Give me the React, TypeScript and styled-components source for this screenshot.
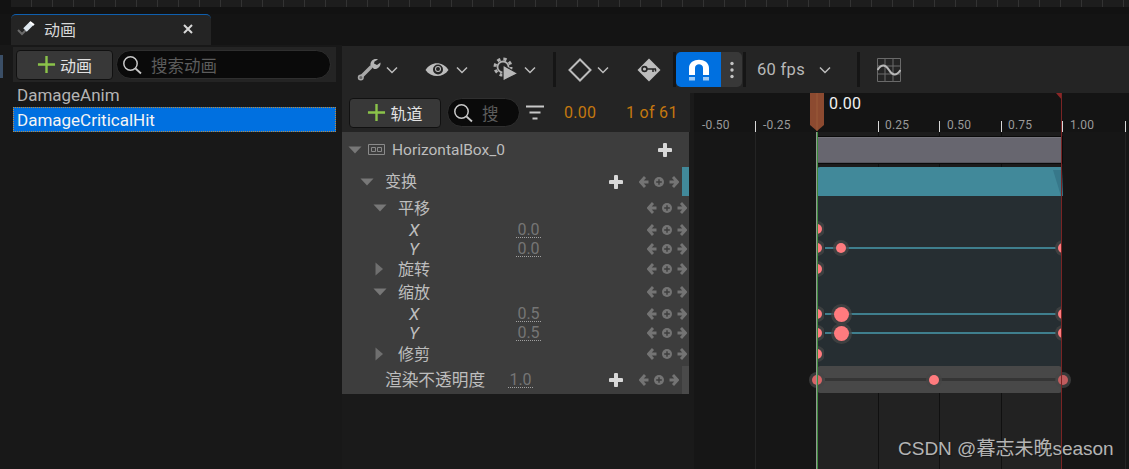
import React from "react";
import styled, { createGlobalStyle } from "styled-components";

const FONT = `Roboto, "Noto Sans CJK SC", sans-serif`;

const Global = createGlobalStyle`
  html, body { margin: 0; padding: 0; background: #141414; }
  * { box-sizing: border-box; }
`;

const Page = styled.div`
  position: relative;
  width: 1129px;
  height: 469px;
  overflow: hidden;
  display: flex;
  flex-direction: column;
  background: #141414;
  font-family: ${FONT};
  font-size: 16px;
  color: #c0c0c0;
`;

const TopStrip = styled.div`
  height: 14px;
  flex: none;
  position: relative;
  background: #121212;
  &::before {
    content: "";
    position: absolute;
    left: 11px;
    right: 0;
    top: 0;
    height: 7px;
    background-color: #1d1d1d;
    background-image: repeating-linear-gradient(90deg, transparent 0 20px, #333 20px 21px);
  }
`;

const TabBar = styled.div`
  height: 31px;
  flex: none;
  padding-left: 11px;
  display: flex;
  background: #141414;
`;

const Tab = styled.div`
  width: 200px;
  height: 31px;
  background: #242424;
  border-top: 1px solid #0f5fae;
  border-radius: 5px 5px 0 0;
  display: flex;
  align-items: center;
  padding: 0 18px 2px 6px;
  color: #d8d8d8;
`;

const TabLabel = styled.span`
  margin-left: 7px;
  flex: 1;
`;

const Body = styled.div`
  flex: 1;
  display: flex;
  min-height: 0;
`;

const LeftPanel = styled.div`
  width: 342px;
  flex: none;
  padding: 2px 6px 0 13px;
  display: flex;
  flex-direction: column;
  position: relative;
  background: #181818;
`;

const LeftEdge = styled.div`
  position: absolute;
  left: 0;
  top: 10px;
  width: 3px;
  height: 23px;
  background: #3a4e66;
`;

const LeftToolbar = styled.div`
  height: 35px;
  background: #242424;
  display: flex;
  align-items: center;
  padding-left: 3px;
`;

const AddButton = styled.div<{ $w: number }>`
  width: ${(p) => p.$w}px;
  height: 30px;
  flex: none;
  display: flex;
  align-items: center;
  justify-content: center;
  gap: 4px;
  background: #383838;
  border: 1px solid #111;
  border-radius: 4px;
  color: #e2e2e2;
  font-size: 16px;
`;

const SearchBox = styled.div<{ $w: number; $ml: number }>`
  width: ${(p) => p.$w}px;
  margin-left: ${(p) => p.$ml}px;
  height: 29px;
  flex: none;
  overflow: hidden;
  display: flex;
  align-items: center;
  gap: 9px;
  padding-left: 5px;
  background: #0a0a0a;
  border: 1px solid #2f2f2f;
  border-radius: 15px;
  color: #5c5c5c;
  font-size: 16.5px;
  white-space: nowrap;
`;

const AssetRow = styled.div<{ $selected?: boolean }>`
  height: 25px;
  padding-left: 4px;
  display: flex;
  align-items: center;
  font-size: 17px;
  color: ${(p) => (p.$selected ? "#f4f4f4" : "#b4b4b4")};
  background: ${(p) => (p.$selected ? "#0070e0" : "transparent")};
  outline: ${(p) => (p.$selected ? "1px dotted #c08a3a" : "none")};
  outline-offset: -1px;
`;

const RightPanel = styled.div`
  flex: 1;
  min-width: 0;
  display: flex;
  flex-direction: column;
  padding-top: 1px;
`;

const MainToolbar = styled.div`
  height: 47px;
  flex: none;
  background: #242424;
  display: flex;
  align-items: center;
  padding-left: 15px;
`;

const ToolItem = styled.div<{ $w: number }>`
  width: ${(p) => p.$w}px;
  flex: none;
  display: flex;
  align-items: center;
`;

const Separator = styled.div<{ $ml: number; $mr: number }>`
  width: 3px;
  height: 35px;
  flex: none;
  margin: 0 ${(p) => p.$mr}px 0 ${(p) => p.$ml}px;
  background: #151515;
`;

const SnapButton = styled.div`
  width: 45px;
  height: 35px;
  flex: none;
  background: #0070e0;
  border-radius: 5px 0 0 5px;
  display: flex;
  align-items: center;
  justify-content: center;
`;

const SnapMenu = styled.div`
  width: 21px;
  height: 35px;
  flex: none;
  background: #383838;
  border-radius: 0 5px 5px 0;
  display: flex;
  align-items: center;
  justify-content: center;
`;

const FpsLabel = styled.span`
  color: #b8b8b8;
  font-size: 16.5px;
  width: 62px;
  letter-spacing: 0.3px;
`;

const Workspace = styled.div`
  flex: 1;
  min-height: 0;
  display: flex;
  background: #1a1a1a;
`;

const TrackColumn = styled.div`
  width: 348px;
  flex: none;
  display: flex;
  flex-direction: column;
`;

const TrackToolbar = styled.div`
  height: 39px;
  flex: none;
  background: #242424;
  display: flex;
  align-items: center;
  padding-left: 7px;
`;

const FilterSlot = styled.div`
  margin-left: 6px;
  display: flex;
  width: 38px;
`;

const TimeText = styled.span<{ $w: number }>`
  width: ${(p) => p.$w}px;
  flex: none;
  color: #c4780f;
  font-size: 16px;
  letter-spacing: 0.3px;
`;

const TrackList = styled.div`
  width: 347px;
  background: #3d3d3d;
  display: flex;
  flex-direction: column;
`;

const TrackRow = styled.div<{ $h: number; $indent: number }>`
  height: ${(p) => p.$h}px;
  flex: none;
  position: relative;
  display: flex;
  align-items: center;
  padding-left: ${(p) => p.$indent}px;
  color: #bdbdbd;
`;

const CaretSlot = styled.div<{ $w: number }>`
  width: ${(p) => p.$w}px;
  flex: none;
  display: flex;
  align-items: center;
`;

const RowLabel = styled.span<{ $italic?: boolean; $w?: number; $size?: number }>`
  font-style: ${(p) => (p.$italic ? "italic" : "normal")};
  font-size: ${(p) => p.$size ?? (p.$italic ? 17 : 16)}px;
  line-height: 20px;
  padding: ${(p) => (p.$italic ? "0 0 1px" : "1px 0 0")};
  ${(p) => (p.$w ? `width: ${p.$w}px; flex: none;` : "")}
`;

const ObjectLabel = styled.span`
  margin-left: 7px;
  font-size: 15.5px;
  line-height: 20px;
`;

const ValueField = styled.span`
  width: 25px;
  flex: none;
  text-align: center;
  font-size: 16px;
  line-height: 15px;
  color: #757575;
  border-bottom: 1px dotted #a0a0a0;
`;

const RowRight = styled.div<{ $pr: number }>`
  margin-left: auto;
  padding-right: ${(p) => p.$pr}px;
  display: flex;
  align-items: center;
`;

const PlusSlot = styled.div`
  width: 14px;
  margin-right: 16px;
  flex: none;
  display: flex;
`;

const ColorTab = styled.div<{ $c: string }>`
  position: absolute;
  right: 0;
  top: 0;
  bottom: 0;
  width: 7px;
  background: ${(p) => p.$c};
`;

const Timeline = styled.div`
  flex: 1;
  min-width: 0;
  margin-left: 4px;
  position: relative;
  background: #161616;
  display: flex;
  flex-direction: column;
`;

const Ruler = styled.div`
  height: 39px;
  flex: none;
  position: relative;
  background: #141414;
`;

const Tick = styled.div<{ $x: number }>`
  position: absolute;
  left: ${(p) => p.$x}px;
  bottom: 0;
  width: 1px;
  height: 11px;
  background: #d8d8d8;
`;

const TickLabel = styled.span<{ $x: number }>`
  position: absolute;
  left: ${(p) => p.$x}px;
  top: 25px;
  font-size: 12px;
  line-height: 15px;
  color: #9a9a9a;
  letter-spacing: 0.2px;
`;

const CurrentTime = styled.span`
  position: absolute;
  left: 135px;
  top: 1px;
  font-size: 16px;
  line-height: 19px;
  color: #f0f0f0;
  letter-spacing: 0.3px;
`;

const PlayHead = styled.svg`
  position: absolute;
  left: 115px;
  top: 0;
`;

const EndFlag = styled.svg`
  position: absolute;
  left: 362px;
  top: 0;
`;

const Tracks = styled.div`
  flex: 1;
  margin-left: 123px;
  width: 245px;
  display: flex;
  flex-direction: column;
  position: relative;
`;

const GridLine = styled.div<{ $x: number }>`
  position: absolute;
  top: 0;
  bottom: 0;
  width: 1px;
  left: ${(p) => p.$x}px;
  background: #101010;
`;

const OuterLine = styled(GridLine)`
  top: 39px;
  background: #242424;
`;

const StartLine = styled.div`
  position: absolute;
  left: 122px;
  top: 39px;
  bottom: 0;
  width: 2px;
  background: linear-gradient(90deg, #8f9a8f 50%, #3c8a3c 50%);
  z-index: 3;
`;

const EndLine = styled.div`
  position: absolute;
  left: 367px;
  top: 0;
  bottom: 0;
  width: 1px;
  background: #7a2424;
  z-index: 3;
`;

const ObjectBar = styled.div`
  height: 35px;
  flex: none;
  position: relative;
  background: #1c1c1c;
  padding: 5px 0 4px;
`;

const ObjectFill = styled.div`
  position: relative;
  height: 100%;
  background: #67666f;
  border-top: 1px solid #75747c;
  border-bottom: 1px solid #55545c;
  outline: 1px solid #0a0a0a;
`;

const SectionHeader = styled.div`
  height: 29px;
  flex: none;
  position: relative;
  background: #41899a;
  border-radius: 3px 0 0 0;
`;

const SectionNotch = styled.svg`
  position: absolute;
  right: -1px;
  top: 0;
`;

const ChildArea = styled.div`
  height: 170px;
  flex: none;
  background: #262e32;
  position: relative;
`;

const OpacityBar = styled.div`
  height: 27px;
  flex: none;
  position: relative;
  background: #484848;
  border-radius: 3px;
`;

const BelowArea = styled.div`
  flex: 1;
  position: relative;
  background: #222;
`;

const KeyLine = styled.div<{ $y: number; $c: string; $h?: number }>`
  position: absolute;
  left: 8px;
  right: 6px;
  top: ${(p) => p.$y}px;
  height: ${(p) => p.$h ?? 2}px;
  background: ${(p) => p.$c};
`;

const Key = styled.div<{ $x: number; $y: number; $r: number; $c?: string }>`
  position: absolute;
  left: ${(p) => p.$x - p.$r}px;
  top: ${(p) => p.$y - p.$r}px;
  width: ${(p) => p.$r * 2}px;
  height: ${(p) => p.$r * 2}px;
  border-radius: 50%;
  background: ${(p) => p.$c ?? "#ff7b7e"};
  box-shadow: 0 0 0 3px rgba(70, 70, 70, 0.75);
  z-index: 2;
`;

const ClipBox = styled.div<{ $x: number; $y: number }>`
  position: absolute;
  left: ${(p) => p.$x}px;
  top: ${(p) => p.$y}px;
  width: 7px;
  height: 16px;
  overflow: hidden;
  z-index: 2;
`;

const ClipKey = styled.div<{ $dx: number }>`
  position: absolute;
  left: ${(p) => p.$dx}px;
  top: 3px;
  width: 10px;
  height: 10px;
  border-radius: 50%;
  background: #ff7b7e;
  box-shadow: 0 0 0 3px rgba(70, 70, 70, 0.75);
`;

const Watermark = styled.div`
  position: absolute;
  left: 898px;
  top: 438px;
  font-family: "Liberation Sans", "Noto Sans CJK SC", sans-serif;
  font-size: 19px;
  line-height: 22px;
  color: #b4b4b4;
  text-shadow: 1px 1px 1px #1a1a1a;
  white-space: nowrap;
  z-index: 5;
`;

const Chevron = ({ ml = 4 }: { ml?: number }) => (
  <svg width="12" height="8" viewBox="0 0 12 8" style={{ marginLeft: ml }}>
    <path d="M1 1.5 6 6.5 11 1.5" fill="none" stroke="#bdbdbd" strokeWidth="1.5" />
  </svg>
);

const Plus = ({ s = 19, c = "#8bc34a", w = 2.4 }: { s?: number; c?: string; w?: number }) => (
  <svg width={s} height={s} viewBox="0 0 20 20">
    <path d="M10 1V19M1 10H19" stroke={c} strokeWidth={w * (20 / s)} fill="none" />
  </svg>
);

const WhitePlus = () => (
  <svg width="14" height="14" viewBox="0 0 14 14">
    <path d="M7 1.5V12.5M1.5 7H12.5" stroke="#d8d8d8" strokeWidth="4" fill="none" strokeLinecap="round" />
  </svg>
);

const SearchIcon = () => (
  <svg width="20" height="20" viewBox="0 0 20 20" style={{ flex: "none" }}>
    <circle cx="8.5" cy="8.5" r="6.7" fill="none" stroke="#c8c8c8" strokeWidth="1.5" />
    <path d="M13.5 13.5 19 18.5" stroke="#c8c8c8" strokeWidth="1.8" />
  </svg>
);

const TabIcon = () => (
  <svg width="20" height="18" viewBox="0 0 20 18">
    <path d="M1 10 5 14 9 10" fill="none" stroke="#6a6a6a" strokeWidth="2" />
    <path d="M8 10 15 3" stroke="#dfe8f0" strokeWidth="5" />
    <path d="M13 2 17 5" stroke="#ffffff" strokeWidth="2" />
  </svg>
);

const Wrench = () => (
  <svg width="25" height="25" viewBox="0 0 25 25">
    <path d="M3 21 14 10" stroke="#a8a8a8" strokeWidth="3.5" strokeLinecap="round" />
    <circle cx="3.8" cy="20.5" r="2.3" fill="#666" stroke="#a8a8a8" strokeWidth="1.5" />
    <path d="M21 2.5C17 1 13 4 13.5 8.5L17 12C21 12.5 24 9 23.5 5.5L20 8 17 6.5 17.5 4.5Z" fill="#b4b4b4" />
  </svg>
);

const Eye = () => (
  <svg width="24" height="16" viewBox="0 0 24 16">
    <path d="M0.5 8C6 -1 18 -1 23.5 8 18 16 6 16 0.5 8Z" fill="#bcbcbc" />
    <circle cx="13" cy="7.5" r="5" fill="#242424" />
    <circle cx="13" cy="7" r="3" fill="#bcbcbc" />
    <circle cx="13" cy="7" r="2" fill="#242424" />
  </svg>
);

const GearPlay = () => (
  <svg width="26" height="25" viewBox="0 0 26 25">
    <circle cx="10" cy="10" r="8" fill="none" stroke="#b0b0b0" strokeWidth="3" strokeDasharray="3.3 3" />
    <circle cx="10" cy="10" r="5.5" fill="none" stroke="#b0b0b0" strokeWidth="1.8" />
    <path d="M10 8 25 16.5 10 24Z" fill="#b8b8b8" stroke="#242424" strokeWidth="1.2" />
  </svg>
);

const Diamond = () => (
  <svg width="24" height="24" viewBox="0 0 24 24">
    <path d="M12 1.5 22.5 12 12 22.5 1.5 12Z" fill="none" stroke="#bcbcbc" strokeWidth="2" />
  </svg>
);

const KeyDiamond = () => (
  <svg width="24" height="24" viewBox="0 0 24 24">
    <path d="M12 0.5 23.5 12 12 23.5 0.5 12Z" fill="#bcbcbc" />
    <circle cx="7.5" cy="11" r="2.4" fill="none" stroke="#242424" strokeWidth="1.6" />
    <path d="M10 11H19M16 11V14M18.5 11V13.5" stroke="#242424" strokeWidth="1.5" fill="none" />
  </svg>
);

const Magnet = () => (
  <svg width="22" height="24" viewBox="0 0 22 24">
    <path d="M1 17V10C1 -1 21 -1 21 10V17H15V10C15 5 7 5 7 10V17Z" fill="#ffffff" />
    <path d="M1 19H7V22.5H1ZM15 19H21V22.5H15Z" fill="#9cc9f5" />
  </svg>
);

const Kebab = () => (
  <svg width="4" height="18" viewBox="0 0 4 18">
    <circle cx="2" cy="2.5" r="1.7" fill="#c4c4c4" />
    <circle cx="2" cy="9" r="1.7" fill="#c4c4c4" />
    <circle cx="2" cy="15.5" r="1.7" fill="#c4c4c4" />
  </svg>
);

const GraphIcon = () => (
  <svg width="24" height="24" viewBox="0 0 24 24">
    <path d="M0.5 0.5H23.5V23.5H0.5ZM8 0.5V23.5M16 0.5V23.5M0.5 8H23.5M0.5 16H23.5" fill="none" stroke="#6a6a6a" strokeWidth="1" />
    <path d="M0.5 12C5 5 9 7 12 12S19 19 23.5 12" fill="none" stroke="#b8b8b8" strokeWidth="2" />
  </svg>
);

const FilterIcon = () => (
  <svg width="18" height="16" viewBox="0 0 18 16">
    <path d="M0 1.5H18M3.5 7.5H14.5M6.5 13.5H11.5" stroke="#c8c8c8" strokeWidth="2.2" />
  </svg>
);

const Down = () => (
  <svg width="14" height="8" viewBox="0 0 14 8">
    <path d="M0.5 0.5H13.5L7 7.5Z" fill="#777" />
  </svg>
);

const Right = () => (
  <svg width="8" height="14" viewBox="0 0 8 14">
    <path d="M0.5 0.5 8 7 0.5 13.5Z" fill="#6f6f6f" />
  </svg>
);

const BoxIcon = () => (
  <svg width="17" height="11" viewBox="0 0 17 11">
    <path d="M0.5 0.5H16.5V10.5H0.5Z" fill="none" stroke="#8a8a8a" strokeWidth="1" />
    <path d="M3.5 3.5H7.5V7.5H3.5ZM9.5 3.5H13.5V7.5H9.5Z" fill="none" stroke="#8a8a8a" strokeWidth="1" />
  </svg>
);

const KeyNav = () => (
  <svg width="40" height="12" viewBox="0 0 40 12">
    <g fill="none" stroke="#747474" strokeWidth="2.8">
      <path d="M9.5 6H2M6 1 1.5 6 6 11" />
      <path d="M30.5 6H38M34 1 38.5 6 34 11" />
    </g>
    <circle cx="20" cy="6" r="5" fill="#747474" />
    <path d="M20 3.2V8.8M17.2 6H22.8" stroke="#3d3d3d" strokeWidth="1.4" />
  </svg>
);

type RowSpec = {
  h: number;
  indent: number;
  caret?: "down" | "right";
  caretW: number;
  label: string;
  italic?: boolean;
  value?: string;
  labelW?: number;
};

const SUB_ROWS: RowSpec[] = [
  { h: 24, indent: 31, caret: "down", caretW: 25, label: "平移" },
  { h: 20, indent: 67, caretW: 0, label: "X", italic: true, labelW: 107, value: "0.0" },
  { h: 18, indent: 67, caretW: 0, label: "Y", italic: true, labelW: 107, value: "0.0" },
  { h: 22, indent: 33, caret: "right", caretW: 23, label: "旋转" },
  { h: 24, indent: 31, caret: "down", caretW: 25, label: "缩放" },
  { h: 20, indent: 67, caretW: 0, label: "X", italic: true, labelW: 107, value: "0.5" },
  { h: 18, indent: 67, caretW: 0, label: "Y", italic: true, labelW: 107, value: "0.5" },
  { h: 24, indent: 33, caret: "right", caretW: 23, label: "修剪" },
];

const TICKS = [61, 184, 245, 307, 368, 431];
const LABELS: [string, number][] = [
  ["-0.50", 8],
  ["-0.25", 69],
  ["0.25", 191],
  ["0.50", 253],
  ["0.75", 314],
  ["1.00", 376],
];
const INNER_GRID = [61, 122, 184];

export default function App() {
  return (
    <Page>
      <Global />
      <TopStrip />
      <TabBar>
        <Tab>
          <TabIcon />
          <TabLabel>动画</TabLabel>
          <svg width="10" height="10" viewBox="0 0 10 10">
            <path d="M1 1 9 9M9 1 1 9" stroke="#d8d8d8" strokeWidth="2" />
          </svg>
        </Tab>
      </TabBar>
      <Body>
        <LeftPanel>
          <LeftEdge />
          <LeftToolbar>
            <AddButton $w={97}>
              <Plus />
              动画
            </AddButton>
            <SearchBox $w={215} $ml={3}>
              <SearchIcon />
              搜索动画
            </SearchBox>
          </LeftToolbar>
          <AssetRow>DamageAnim</AssetRow>
          <AssetRow $selected>DamageCriticalHit</AssetRow>
        </LeftPanel>
        <RightPanel>
          <MainToolbar>
            <ToolItem $w={68}>
              <Wrench />
              <Chevron ml={4} />
            </ToolItem>
            <ToolItem $w={68}>
              <Eye />
              <Chevron ml={7} />
            </ToolItem>
            <ToolItem $w={60}>
              <GearPlay />
              <Chevron ml={5} />
            </ToolItem>
            <Separator $ml={0} $mr={12} />
            <ToolItem $w={69}>
              <Diamond />
              <Chevron ml={5} />
            </ToolItem>
            <ToolItem $w={36}>
              <KeyDiamond />
            </ToolItem>
            <Separator $ml={0} $mr={0} />
            <SnapButton>
              <Magnet />
            </SnapButton>
            <SnapMenu>
              <Kebab />
            </SnapMenu>
            <Separator $ml={1} $mr={11} />
            <FpsLabel>60 fps</FpsLabel>
            <Chevron ml={0} />
            <Separator $ml={26} $mr={17} />
            <GraphIcon />
          </MainToolbar>
          <Workspace>
            <TrackColumn>
              <TrackToolbar>
                <AddButton $w={92}>
                  <Plus />
                  轨道
                </AddButton>
                <SearchBox $w={73} $ml={6}>
                  <SearchIcon />搜
                </SearchBox>
                <FilterSlot>
                  <FilterIcon />
                </FilterSlot>
                <TimeText $w={62}>0.00</TimeText>
                <TimeText $w={56}>1 of 61</TimeText>
              </TrackToolbar>
              <TrackList>
                <TrackRow $h={35} $indent={6}>
                  <CaretSlot $w={20}>
                    <Down />
                  </CaretSlot>
                  <BoxIcon />
                  <ObjectLabel>HorizontalBox_0</ObjectLabel>
                  <RowRight $pr={17}>
                    <WhitePlus />
                  </RowRight>
                </TrackRow>
                <TrackRow $h={29} $indent={18}>
                  <CaretSlot $w={25}>
                    <Down />
                  </CaretSlot>
                  <RowLabel>变换</RowLabel>
                  <RowRight $pr={10}>
                    <PlusSlot>
                      <WhitePlus />
                    </PlusSlot>
                    <KeyNav />
                  </RowRight>
                  <ColorTab $c="#41899a" />
                </TrackRow>
                {SUB_ROWS.map((r, i) => (
                  <TrackRow key={i} $h={r.h} $indent={r.indent}>
                    <CaretSlot $w={r.caretW}>
                      {r.caret === "down" && <Down />}
                      {r.caret === "right" && <Right />}
                    </CaretSlot>
                    <RowLabel $italic={r.italic} $w={r.labelW}>
                      {r.label}
                    </RowLabel>
                    {r.value && <ValueField>{r.value}</ValueField>}
                    <RowRight $pr={2}>
                      <KeyNav />
                    </RowRight>
                  </TrackRow>
                ))}
                <TrackRow $h={28} $indent={43}>
                  <RowLabel $w={123} $size={16.7}>渲染不透明度</RowLabel>
                  <ValueField>1.0</ValueField>
                  <RowRight $pr={10}>
                    <PlusSlot>
                      <WhitePlus />
                    </PlusSlot>
                    <KeyNav />
                  </RowRight>
                  <ColorTab $c="#4a4a4a" />
                </TrackRow>
              </TrackList>
            </TrackColumn>
            <Timeline>
              <Ruler>
                {TICKS.map((x) => (
                  <Tick key={x} $x={x} />
                ))}
                {LABELS.map(([t, x]) => (
                  <TickLabel key={t} $x={x}>
                    {t}
                  </TickLabel>
                ))}
                <CurrentTime>0.00</CurrentTime>
                <PlayHead width="16" height="39" viewBox="0 0 16 39">
                  <path d="M1 0H15V32L8 38 1 32Z" fill="#8c4a30" />
                  <path d="M7 0H9V38H7Z" fill="#9a5a38" opacity="0.5" />
                </PlayHead>
                <EndFlag width="6" height="8" viewBox="0 0 6 8">
                  <path d="M0 0H6V7Z" fill="#8a2626" />
                </EndFlag>
              </Ruler>
              <StartLine />
              <EndLine />
              <OuterLine $x={61} />
              <OuterLine $x={431} />
              <Tracks>
                <ObjectBar>
                  {INNER_GRID.map((x) => (
                    <GridLine key={x} $x={x} />
                  ))}
                  <ObjectFill />
                </ObjectBar>
                <SectionHeader>
                  <SectionNotch width="12" height="29" viewBox="0 0 12 29">
                    <path d="M2 3H11L12 29H10Z" fill="#37788a" />
                  </SectionNotch>
                </SectionHeader>
                <ChildArea>
                  <KeyLine $y={51} $c="#3f7f8e" />
                  <KeyLine $y={117} $c="#3f7f8e" />
                  <KeyLine $y={136} $c="#3f7f8e" />
                  <ClipBox $x={0} $y={25}>
                    <ClipKey $dx={-5} />
                  </ClipBox>
                  <ClipBox $x={0} $y={44}>
                    <ClipKey $dx={-5} />
                  </ClipBox>
                  <ClipBox $x={0} $y={65}>
                    <ClipKey $dx={-5} />
                  </ClipBox>
                  <ClipBox $x={0} $y={110}>
                    <ClipKey $dx={-5} />
                  </ClipBox>
                  <ClipBox $x={0} $y={129}>
                    <ClipKey $dx={-5} />
                  </ClipBox>
                  <ClipBox $x={0} $y={150}>
                    <ClipKey $dx={-5} />
                  </ClipBox>
                  <Key $x={24} $y={52} $r={5} />
                  <Key $x={24} $y={118} $r={7.5} />
                  <Key $x={24} $y={137} $r={7.5} />
                  <ClipBox $x={238} $y={44}>
                    <ClipKey $dx={3} />
                  </ClipBox>
                  <ClipBox $x={238} $y={110}>
                    <ClipKey $dx={3} />
                  </ClipBox>
                  <ClipBox $x={238} $y={129}>
                    <ClipKey $dx={3} />
                  </ClipBox>
                </ChildArea>
                <OpacityBar>
                  <KeyLine $y={12} $c="#353535" $h={3} />
                  <Key $x={0} $y={14} $r={5} $c="#d86466" />
                  <Key $x={117} $y={14} $r={5} />
                  <Key $x={246} $y={14} $r={5} $c="#c05c5e" />
                </OpacityBar>
                <BelowArea>
                  {INNER_GRID.map((x) => (
                    <GridLine key={x} $x={x} />
                  ))}
                </BelowArea>
              </Tracks>
            </Timeline>
          </Workspace>
        </RightPanel>
      </Body>
      <Watermark>CSDN @暮志未晚season</Watermark>
    </Page>
  );
}
